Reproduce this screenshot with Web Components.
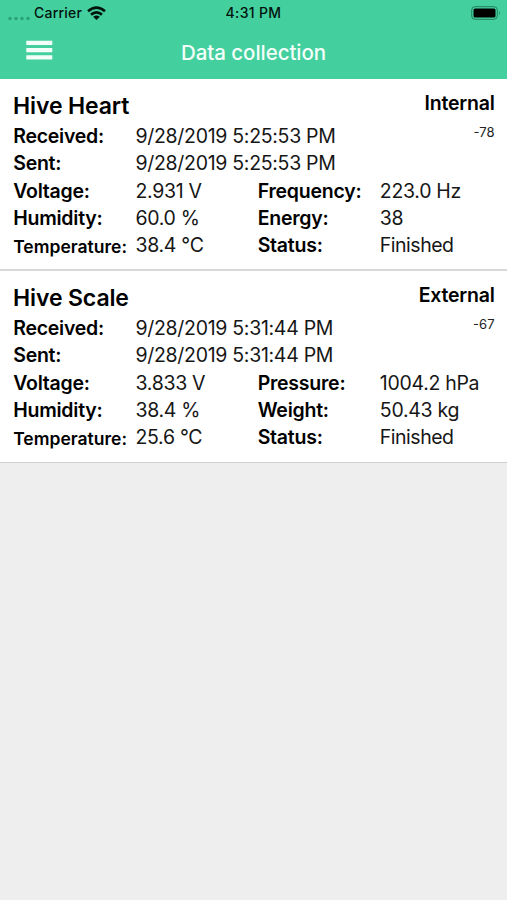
<!DOCTYPE html>
<html lang="en"><head><meta charset="utf-8"><title>Data collection</title>
<style>html,body{margin:0;height:100%;background:#eee}body{font-family:Inter,"Liberation Sans",sans-serif;color:#000;overflow:hidden}</style></head>
<body><app-screen></app-screen>
<script>
class StatusBar extends HTMLElement{
  constructor(){super();this.attachShadow({mode:'open'}).innerHTML=`
<style>
:host{display:grid;grid-template-columns:1fr auto 1fr;align-items:center;height:25px;font-size:14px;font-weight:500;color:#02140d}
.left{display:flex;align-items:center;padding-left:8px}
.dots{width:22px;height:10px;margin:6px 4px 0 0}
.wifi{width:19px;height:14px;margin-left:5px}
.name{letter-spacing:.22px}
.time{letter-spacing:.35px}
.right{display:flex;justify-content:flex-end;padding-right:6px}
svg{display:block}
</style>
<div class="left"><svg class="dots" viewBox="0 0 22 10"><g fill="#219470" opacity=".75"><circle cx="2" cy="7.5" r="1.7"/><circle cx="8" cy="7.5" r="1.7"/><circle cx="14" cy="7.5" r="1.7"/><circle cx="20" cy="7.5" r="1.7"/></g></svg><span class="name">Carrier</span>
<svg class="wifi" viewBox="0 0 19 14"><g fill="none" stroke="#02140d" stroke-width="2.7"><path d="M1 5.2Q9.5-1.8 18 5.2"/><path d="M4 8.6Q9.5 4.2 15 8.6"/></g><path d="M6.2 10.8Q9.5 8.1 12.8 10.8L9.5 14Z" fill="#02140d"/></svg></div>
<span class="time">4:31 PM</span>
<div class="right"><svg width="30" height="14" viewBox="0 0 30 14"><rect x=".7" y=".7" width="25.6" height="12.6" rx="3.3" fill="none" stroke="#23805f" stroke-width="1"/><rect x="2.5" y="2.5" width="22" height="9" rx="1.6"/><path d="M28 4.8q1.8 2.2 0 4.4z" fill="#23805f"/></svg></div>`}
}
customElements.define('status-bar',StatusBar);
class NavBar extends HTMLElement{
  constructor(){super();this.attachShadow({mode:'open'}).innerHTML=`
<style>
:host{display:grid;grid-template-columns:1fr auto 1fr;align-items:center;height:54px;color:#f4fffa}
svg{display:block;margin:-4px 0 0 26px}
span{font-size:20.5px;font-weight:500;line-height:26px;letter-spacing:-.05px;padding-top:2px}
</style><svg width="27" height="20" viewBox="0 0 27 20" fill="#f4fffa"><path d="M.3.8h26v4.2H.3zM.3 8h26v4.2H.3zM.3 15.3h26v4.2H.3z"/></svg><span><slot></slot></span><i></i>`}
}
customElements.define('nav-bar',NavBar);
class HiveCard extends HTMLElement{
  constructor(){super();const a=n=>this.getAttribute(n);
  this.attachShadow({mode:'open'}).innerHTML=`
<style>
:host{display:flex;flex-direction:column;height:192px;box-sizing:border-box;border-bottom:2px solid #d8d8d8;background:#fff}
:host(:last-of-type){height:191px;border-bottom:0;box-shadow:0 1px 0 #d0d0d0}
.head{display:flex;justify-content:space-between;padding:12px 12.5px 0 13px;height:44px;box-sizing:border-box}
h2{margin:0;font-size:23px;font-weight:600;line-height:31px;letter-spacing:-.12px}
.side{display:flex;flex-direction:column;align-items:flex-end}
b{font-size:19.5px;font-weight:600;line-height:24px;letter-spacing:-.2px;margin-right:-.2px}
small{font-size:13px;line-height:16px;margin-top:9px;color:#222}
</style><div class="head"><h2>${a('name')}</h2><div class="side"><b>${a('place')}</b><small>${a('signal')}</small></div></div><slot></slot>`}
}
customElements.define('hive-card',HiveCard);
class DataRow extends HTMLElement{
  constructor(){super();
  const cells=this.getAttribute('cells').split('|');
  this.attachShadow({mode:'open'}).innerHTML=`
<style>
:host{display:grid;grid-template-columns:122.3px 122.2px 122.2px 1fr;align-items:baseline;height:27.3px;padding-left:13.2px;font-size:19.5px;line-height:27.9px;white-space:nowrap}
.l{font-weight:600;letter-spacing:-.24px}.v{color:#161616;letter-spacing:-.3px}
.word{letter-spacing:-.5px}
.small{font-size:17.5px;letter-spacing:0;position:relative;top:1px}
</style>`+cells.map((c,i)=>`<span class="${i%2?'v':'l'}${c=='Temperature:'?' small':c=='Finished'?' word':''}">${c}</span>`).join('')}
}
customElements.define('data-row',DataRow);
class AppScreen extends HTMLElement{
  constructor(){super();this.attachShadow({mode:'open'}).innerHTML=`
<style>:host{display:block;height:900px}header{background:#44cf9f;height:79px}</style>
<header><status-bar></status-bar><nav-bar>Data collection</nav-bar></header>
<hive-card name="Hive Heart" place="Internal" signal="-78">
<data-row cells="Received:|9/28/2019 5:25:53 PM"></data-row><data-row cells="Sent:|9/28/2019 5:25:53 PM"></data-row>
<data-row cells="Voltage:|2.931 V|Frequency:|223.0 Hz"></data-row><data-row cells="Humidity:|60.0 %|Energy:|38"></data-row><data-row cells="Temperature:|38.4 °C|Status:|Finished"></data-row></hive-card>
<hive-card name="Hive Scale" place="External" signal="-67">
<data-row cells="Received:|9/28/2019 5:31:44 PM"></data-row><data-row cells="Sent:|9/28/2019 5:31:44 PM"></data-row>
<data-row cells="Voltage:|3.833 V|Pressure:|1004.2 hPa"></data-row><data-row cells="Humidity:|38.4 %|Weight:|50.43 kg"></data-row><data-row cells="Temperature:|25.6 °C|Status:|Finished"></data-row></hive-card>`}
}
customElements.define('app-screen',AppScreen);
</script></body></html>
